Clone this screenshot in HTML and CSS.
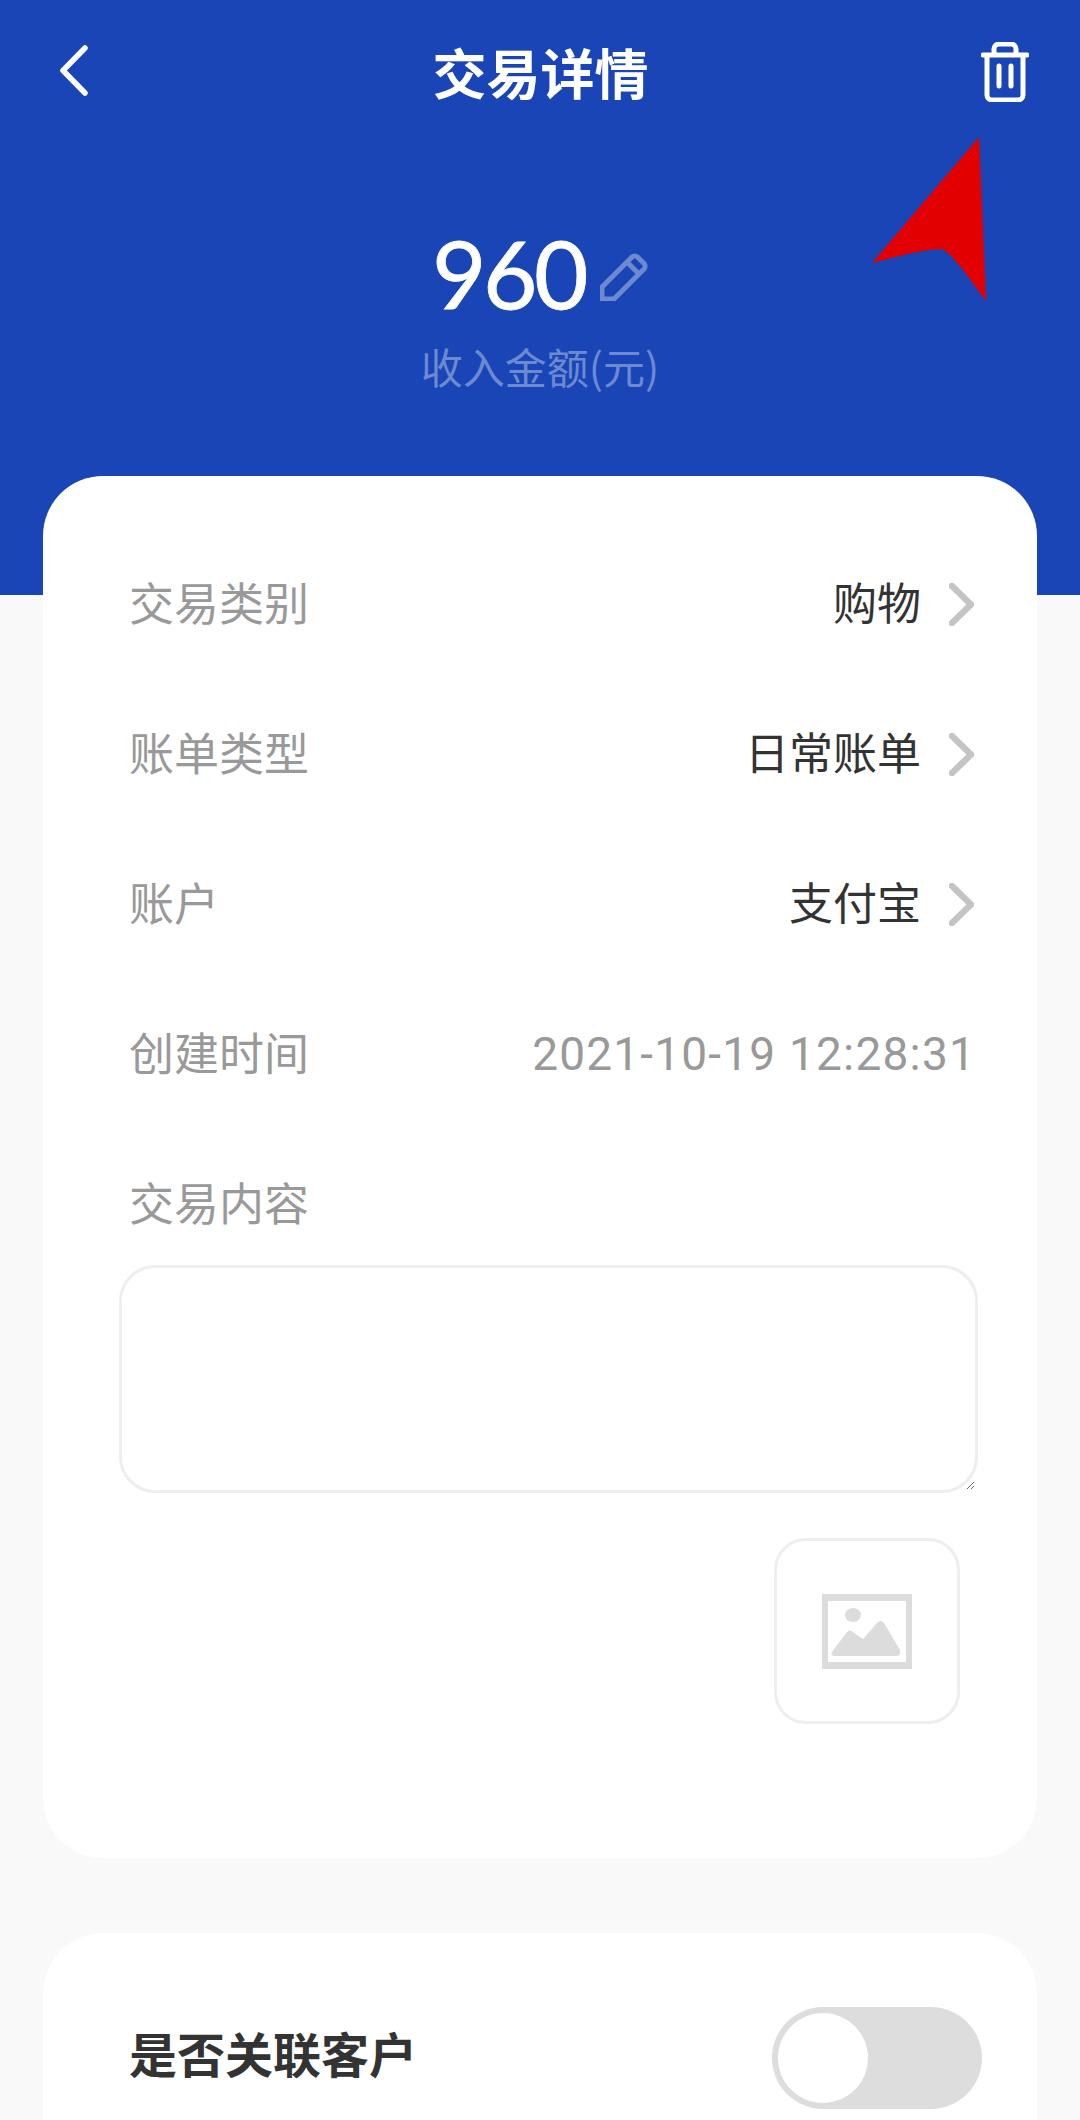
FILE: index.html
```html
<!DOCTYPE html>
<html lang="zh-CN">
<head>
  <meta charset="UTF-8" />
  <meta name="viewport" content="width=device-width, initial-scale=1.0"/>
  <title>交易详情</title>
  <link rel="stylesheet" href="styles.css">
</head>
<body>

  <header class="hero">
    <div class="topbar">
      <svg class="back" viewBox="0 0 28 51"><path d="M25 3 3 25.500 25 48"/></svg>
      <h1>交易详情</h1>
      <svg class="trash" viewBox="0 0 48 60">
        <path d="M2 13H46M6 13V53a5 5 0 0 0 5 5H37a5 5 0 0 0 5-5V13M13 13V7a5 5 0 0 1 5-5H30a5 5 0 0 1 5 5V13M18 24V44M30 24V44"/>
      </svg>
    </div>
    <div class="amount">
      <span class="amount-num">960</span>
      <svg class="pencil" viewBox="0 0 48 48"><path d="M2 46V34L32 4a4 4 0 0 1 5.500 0L44 10.500a4 4 0 0 1 0 5.500L14 46ZM27 9 39 21"/></svg>
    </div>
    <p class="amount-label">收入金额(元)</p>
    <!-- red pointer drawn over the screenshot -->
    <svg class="pointer" viewBox="0 0 114 164"><path d="M107 0 0 126C30 118 55 112 70 112 80 116 100 145 114 164Z"/></svg>
  </header>

  <section class="card detail">
    <div class="row">
      <span class="label">交易类别</span>
      <span class="value">购物</span>
      <svg class="chev" viewBox="0 0 25 43"><path d="M3 3 22 21.500 3 40"/></svg>
    </div>
    <div class="row">
      <span class="label">账单类型</span>
      <span class="value">日常账单</span>
      <svg class="chev" viewBox="0 0 25 43"><path d="M3 3 22 21.500 3 40"/></svg>
    </div>
    <div class="row">
      <span class="label">账户</span>
      <span class="value">支付宝</span>
      <svg class="chev" viewBox="0 0 25 43"><path d="M3 3 22 21.500 3 40"/></svg>
    </div>
    <div class="row">
      <span class="label">创建时间</span>
      <span class="time">2021-10-19 12:28:31</span>
    </div>
    <div class="row row-note">
      <span class="label">交易内容</span>
    </div>
    <textarea class="note"></textarea>
    <div class="uploads">
      <div class="upload">
        <svg class="upload-icon" viewBox="0 0 90 75">
          <path fill-rule="evenodd" d="M0 0H90V75H0ZM6 7V68H84V7Z"/>
          <ellipse cx="31" cy="21" rx="8" ry="7"/>
          <path d="M10 58 25 38Q28 35 31 38L41 45 55 29Q59 25 62 29L78 56Q79 62 74 62H13Q8 62 10 58Z"/>
        </svg>
      </div>
    </div>
  </section>

  <section class="card link">
    <span class="link-title">是否关联客户</span>
    <div class="toggle"><div class="knob"></div></div>
  </section>

</body>
</html>
```

FILE: styles.css
```css
html, body {
  height: 2120px;
  overflow: hidden;
}

body {
  margin: 0;
  background: #f9f9f9;
  font-family: "Noto Sans CJK SC", "Noto Sans", sans-serif;
  color: #333;
}

.hero {
  position: relative;
  height: 595px;
  background-color: #1945b7;
  color: white;
}

.topbar {
  display: flex;
  justify-content: space-between;
  align-items: center;
  padding: 42px 51px 0 60px;
  height: 60px;
}

.topbar h1 {
  margin: 0 0 0 12px;
  font-size: 54px;
  font-weight: 700;
  line-height: 60px;
}

.back {
  width: 28px;
  height: 51px;
  margin-bottom: 3px;
  fill: none;
  stroke: white;
  stroke-width: 5.500;
  stroke-linecap: round;
  stroke-linejoin: round;
}

.trash {
  width: 48px;
  height: 60px;
  fill: none;
  stroke: white;
  stroke-width: 5;
  stroke-linecap: round;
  stroke-linejoin: round;
}

.amount {
  display: flex;
  justify-content: center;
  align-items: center;
  gap: 15px;
  margin-top: 127px;
  height: 88px;
}

.amount-num {
  font-family: Lato, sans-serif;
  font-size: 94px;
  line-height: 88px;
  letter-spacing: -3.500px;
  -webkit-text-stroke: 0.8px white;
}

.pencil {
  width: 48px;
  height: 48px;
  margin-top: 8px;
  fill: none;
  stroke: #6d8ad0;
  stroke-width: 5;
  stroke-linejoin: round;
}

.amount-label {
  margin: 19px 0 0;
  text-align: center;
  font-size: 42px;
  line-height: 60px;
  color: #6d8ad0;
}

.pointer {
  position: absolute;
  left: 872px;
  top: 137px;
  width: 114px;
  height: 164px;
  fill: #e30000;
}

.card {
  margin: 0 43px;
  background: white;
  border-radius: 60px;
}

.detail {
  position: relative;
  margin-top: -119px;
  height: 1332px;
  padding: 50px 64px 0 86px;
}

.row {
  display: flex;
  align-items: center;
  height: 150px;
  font-size: 44px;
}

.label {
  flex: 1;
  font-size: 45px;
  color: #999;
}

.value {
  color: #333;
}

.chev {
  width: 25px;
  height: 43px;
  margin-left: 28px;
  margin-right: -1px;
  margin-top: 6px;
  fill: none;
  stroke: #c4c4c4;
  stroke-width: 6.500;
  stroke-linecap: round;
  stroke-linejoin: round;
}

.time {
  font-family: Roboto, sans-serif;
  font-size: 46px;
  letter-spacing: 1.200px;
  color: #999;
  margin-top: 6px;
  margin-right: -3px;
}

.row-note {
  box-sizing: border-box;
  height: 139px;
  padding-top: 12px;
}

.note {
  display: block;
  box-sizing: border-box;
  width: 859px;
  height: 228px;
  margin: 0 0 0 -10px;
  border: 3px solid #eee;
  border-radius: 36px;
  background: white;
  outline: none;
}

.uploads {
  display: flex;
  justify-content: flex-end;
  margin: 45px 13px 0 0;
}

.upload {
  box-sizing: border-box;
  display: flex;
  justify-content: center;
  align-items: center;
  width: 186px;
  height: 186px;
  border: 3px solid #eee;
  border-radius: 32px;
}

.upload-icon {
  width: 90px;
  height: 75px;
  fill: #dcdcdc;
}

.link {
  display: flex;
  justify-content: space-between;
  align-items: center;
  margin-top: 75px;
  height: 300px;
  padding: 0 55px 51px 86px;
  box-sizing: border-box;
}

.link-title {
  font-size: 48px;
  font-weight: 700;
  color: #333;
  margin-bottom: 12px;
}

.toggle {
  box-sizing: border-box;
  width: 210px;
  height: 102px;
  padding: 6px;
  border-radius: 51px;
  background: #ddd;
}

.knob {
  width: 90px;
  height: 90px;
  border-radius: 50%;
  background: white;
}
```
